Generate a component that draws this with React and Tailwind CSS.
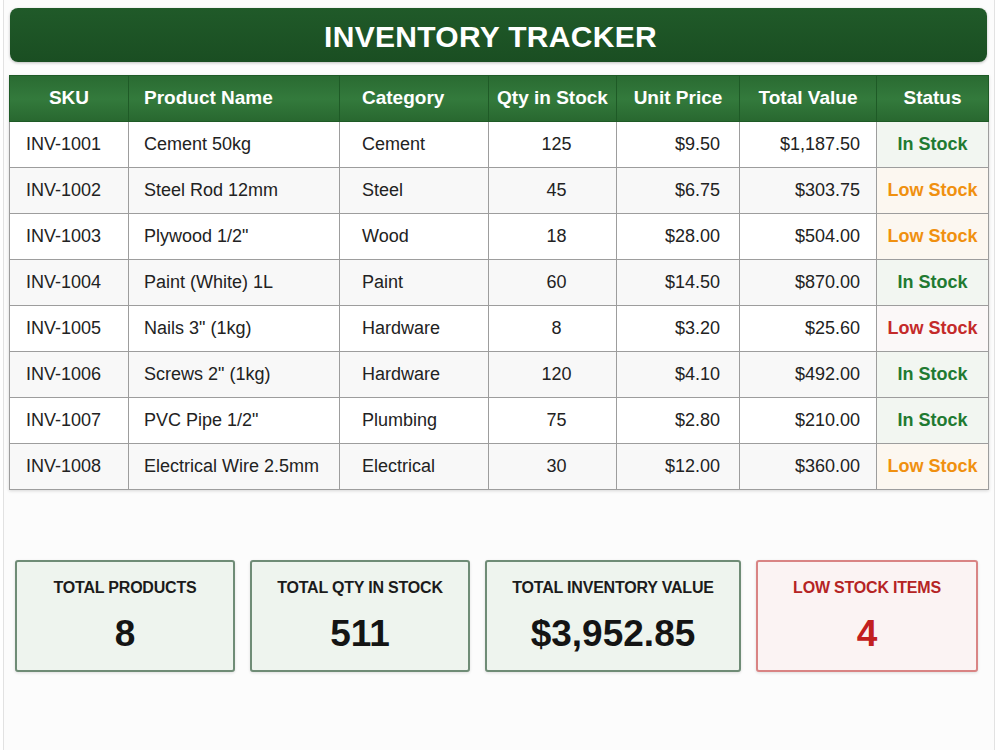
import React from "react";

const items = [
  { sku: "INV-1001", name: "Cement 50kg", category: "Cement", qty: 125, price: "$9.50", total: "$1,187.50", status: "in" },
  { sku: "INV-1002", name: "Steel Rod 12mm", category: "Steel", qty: 45, price: "$6.75", total: "$303.75", status: "low" },
  { sku: "INV-1003", name: "Plywood 1/2\"", category: "Wood", qty: 18, price: "$28.00", total: "$504.00", status: "low" },
  { sku: "INV-1004", name: "Paint (White) 1L", category: "Paint", qty: 60, price: "$14.50", total: "$870.00", status: "in" },
  { sku: "INV-1005", name: "Nails 3\" (1kg)", category: "Hardware", qty: 8, price: "$3.20", total: "$25.60", status: "critical" },
  { sku: "INV-1006", name: "Screws 2\" (1kg)", category: "Hardware", qty: 120, price: "$4.10", total: "$492.00", status: "in" },
  { sku: "INV-1007", name: "PVC Pipe 1/2\"", category: "Plumbing", qty: 75, price: "$2.80", total: "$210.00", status: "in" },
  { sku: "INV-1008", name: "Electrical Wire 2.5mm", category: "Electrical", qty: 30, price: "$12.00", total: "$360.00", status: "low" },
];

const statusStyles = {
  in: { label: "In Stock", className: "text-[#1f7a31] bg-[#f2f6f1]" },
  low: { label: "Low Stock", className: "text-[#f0900f] bg-[#fcf7f0]" },
  critical: { label: "Low Stock", className: "text-[#c42a2a] bg-[#fbf8f8]" },
};

const StatCard = ({ label, value, danger, width }) => (
  <div
    className={`${width} h-[112px] rounded-[3px] border-2 flex flex-col items-center shadow-[0_1px_3px_rgba(0,0,0,0.12)] ${
      danger ? "border-[#d98484] bg-[#fbf3f3]" : "border-[#6f8c76] bg-[#eef4ee]"
    }`}
  >
    <p className={`mt-[14px] text-[16px] font-bold tracking-[-0.2px] ${danger ? "text-[#b52424]" : "text-[#1b1b1b]"}`}>
      {label}
    </p>
    <p className={`mt-[11px] text-[37px] font-bold leading-[46px] ${danger ? "text-[#c22020]" : "text-[#141414]"}`}>
      {value}
    </p>
  </div>
);

export default function App() {
  return (
    <div className="w-[1000px] h-[750px] bg-white" style={{ fontFamily: "'Liberation Sans', Arial, sans-serif" }}>
      <div className="ml-[3px] w-[992px] h-full border-x border-[#e2e2e2] bg-[#fcfcfc] pt-[8px]">
        <div className="ml-[6px] w-[977px] h-[54px] rounded-[8px] bg-gradient-to-b from-[#205a29] to-[#1a4e22] flex items-center justify-center pr-[16px] shadow-[0_1px_3px_rgba(0,0,0,0.25)]">
          <h1 className="text-white text-[30px] font-bold tracking-[0.3px] mt-[2px]">INVENTORY TRACKER</h1>
        </div>

        <table className="mt-[13px] ml-[5px] w-[979px] table-fixed border-collapse text-[18px] text-[#222] shadow-[0_1px_3px_rgba(0,0,0,0.15)]">
          <colgroup>
            <col className="w-[119px]" />
            <col className="w-[211px]" />
            <col className="w-[149px]" />
            <col className="w-[128px]" />
            <col className="w-[123px]" />
            <col className="w-[137px]" />
            <col className="w-[112px]" />
          </colgroup>
          <thead>
            <tr className="h-[46px] bg-gradient-to-b from-[#2a6b32] via-[#337a3c] to-[#28672f] text-white font-bold text-[19px]">
              <th className="border border-[#1e5a26] text-center">SKU</th>
              <th className="border border-[#1e5a26] text-left pl-[15px]">Product Name</th>
              <th className="border border-[#1e5a26] text-left pl-[22px]">Category</th>
              <th className="border border-[#1e5a26] text-center">Qty in Stock</th>
              <th className="border border-[#1e5a26] text-center">Unit Price</th>
              <th className="border border-[#1e5a26] text-center">Total Value</th>
              <th className="border border-[#1e5a26] text-center">Status</th>
            </tr>
          </thead>
          <tbody>
            {items.map((item, i) => {
              const s = statusStyles[item.status];
              return (
                <tr key={item.sku} className={`h-[46px] ${i % 2 === 0 ? "bg-white" : "bg-[#f8f8f8]"}`}>
                  <td className="border border-[#9d9d9d] pl-[16px]">{item.sku}</td>
                  <td className="border border-[#9d9d9d] pl-[15px] whitespace-nowrap">{item.name}</td>
                  <td className="border border-[#9d9d9d] pl-[22px]">{item.category}</td>
                  <td className="border border-[#9d9d9d] text-center pl-[8px]">{item.qty}</td>
                  <td className="border border-[#9d9d9d] text-right pr-[19px]">{item.price}</td>
                  <td className="border border-[#9d9d9d] text-right pr-[16px]">{item.total}</td>
                  <td className={`border border-[#9d9d9d] text-center font-bold ${s.className}`}>{s.label}</td>
                </tr>
              );
            })}
          </tbody>
        </table>

        <div className="mt-[70px] ml-[11px] flex gap-[15px]">
          <StatCard label="TOTAL PRODUCTS" value="8" width="w-[220px]" />
          <StatCard label="TOTAL QTY IN STOCK" value="511" width="w-[220px]" />
          <StatCard label="TOTAL INVENTORY VALUE" value="$3,952.85" width="w-[256px]" />
          <StatCard label="LOW STOCK ITEMS" value="4" danger width="w-[222px]" />
        </div>
      </div>
    </div>
  );
}
